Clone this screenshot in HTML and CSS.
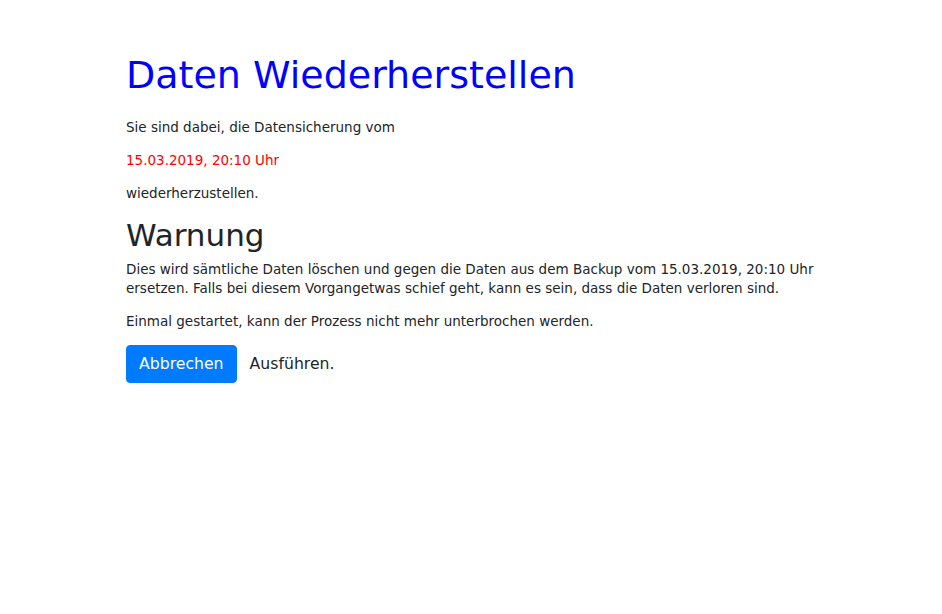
FILE: index.html
```html
<!DOCTYPE html>
<html lang="de">
<head>
<meta charset="utf-8">
<title>Daten Wiederherstellen</title>
<link rel="stylesheet" href="styles.css">
</head>
<body>
<main class="container">
  <h1 class="title">Daten Wiederherstellen</h1>
  <p class="text">Sie sind dabei, die Datensicherung vom</p>
  <p class="text date">15.03.2019, 20:10 Uhr</p>
  <p class="text">wiederherzustellen.</p>
  <h2 class="subtitle">Warnung</h2>
  <p class="text">Dies wird sämtliche Daten löschen und gegen die Daten aus dem Backup vom 15.03.2019, 20:10 Uhr ersetzen. Falls bei diesem Vorgangetwas schief geht, kann es sein, dass die Daten verloren sind.</p>
  <p class="text">Einmal gestartet, kann der Prozess nicht mehr unterbrochen werden.</p>
  <div class="actions">
    <button class="btn btn-primary" type="button">Abbrechen</button>
    <button class="btn btn-plain" type="button">Ausführen.</button>
  </div>
</main>
</body>
</html>
```

FILE: styles.css
```css
* { box-sizing: border-box; }
html, body { margin: 0; padding: 0; background: #fff; }
body {
  font-family: "DejaVu Sans", "Open Sans", sans-serif;
  color: #212529;
  font-size: 16px;
  line-height: 1.5;
}
.container {
  max-width: 720px;
  margin: 0 auto;
  padding: 53px 15px 0;
}
.title {
  margin: 0 0 19px;
  font-size: 38px;
  font-weight: 400;
  line-height: 1.2;
  color: #0000ff;
}
.subtitle {
  margin: 4px 0 6px;
  font-size: 31px;
  font-weight: 400;
  line-height: 1.2;
}
.text {
  margin: 0 0 14px;
  font-size: 13.5px;
  line-height: 19px;
}
.date { color: #ff0000; }
.actions { display: flex; align-items: center; margin-top: 13px; }
.btn {
  font-family: inherit;
  font-size: 15.7px;
  line-height: 24px;
  padding: 6px 12px;
  border: 1px solid transparent;
  border-radius: 4px;
  background: transparent;
  color: #212529;
}
.btn-primary { background: #007bff; border-color: #007bff; color: #fff; }
```
